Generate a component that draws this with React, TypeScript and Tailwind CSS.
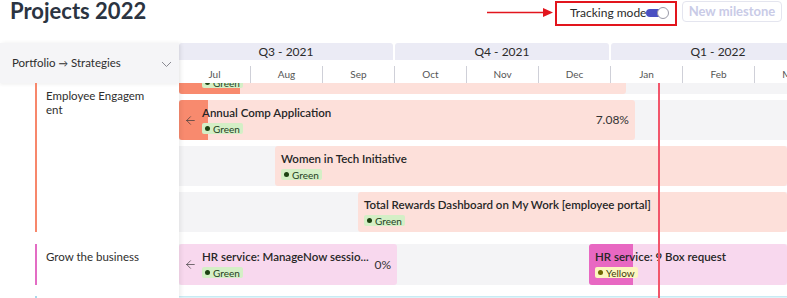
import React from 'react';
import { ArrowLeft } from 'lucide-react';

type BadgeKind = 'green' | 'yellow';

const Badge: React.FC<{ kind: BadgeKind }> = ({ kind }) => (
  <span
    className={`inline-flex items-center gap-[3px] h-[11px] px-[3px] rounded-[2px] text-[10px] leading-none ${
      kind === 'green' ? 'bg-[#d4efc6] text-[#24401c]' : 'bg-[#fcf6bf] text-[#403c0a]'
    }`}
  >
    <span className={`w-[5px] h-[5px] rounded-full ${kind === 'green' ? 'bg-[#1d4212]' : 'bg-[#6f6600]'}`} />
    {kind === 'green' ? 'Green' : 'Yellow'}
  </span>
);

const BarContent: React.FC<{ title: string; badge: BadgeKind; arrow?: boolean; pct?: string }> = ({
  title,
  badge,
  arrow,
  pct,
}) => (
  <div className="relative flex h-full pl-[6px]">
    {arrow && (
      <div className="w-[17px] shrink-0 flex items-center">
        <ArrowLeft size={13} strokeWidth={1.3} className="text-[#3a3a3a] -ml-[1px]" />
      </div>
    )}
    <div className="flex flex-col items-start min-w-0 pt-[5px]">
      <div className="text-[11.5px] leading-[15px] font-semibold text-[#262626] whitespace-nowrap">{title}</div>
      <div className="mt-[3px] flex">
        <Badge kind={badge} />
      </div>
    </div>
    {pct && <div className="ml-auto self-center pr-[6px] text-[12px] text-[#333]">{pct}</div>}
  </div>
);

const quarters = ['Q3 - 2021', 'Q4 - 2021', 'Q1 - 2022'];
const months = ['Jul', 'Aug', 'Sep', 'Oct', 'Nov', 'Dec', 'Jan', 'Feb', 'Mar'];

const App: React.FC = () => {
  return (
    <div className="w-[787px] h-[298px] overflow-hidden bg-white font-['Lato',sans-serif] text-[#2a2a2a]">
      {/* top bar */}
      <div className="h-[43px] flex items-start">
        <h1 className="pl-[10px] text-[22px] leading-none font-bold text-[#2b3441]">Projects 2022</h1>
        <div className="ml-auto flex items-start pr-[5px]">
          <svg width="68" height="25" viewBox="0 0 68 25">
            <line x1="1" y1="12.5" x2="58" y2="12.5" stroke="#e2151d" strokeWidth="1.5" />
            <polygon points="57,8 67,12.5 57,17" fill="#e2151d" />
          </svg>
          <div className="ml-[1px] mt-[1px] h-[25px] w-[122px] border-2 border-solid border-[#e2151d] flex items-center pl-[13px] pb-[2px]">
            <span className="text-[12px] text-[#2a2a2a] whitespace-nowrap">Tracking mode</span>
            <span className="relative shrink-0 w-[23px] h-[12px] flex items-center">
              <span className="w-[18px] h-[8px] rounded-full bg-[#4a50c2]" />
              <span className="absolute right-0 top-0 w-[12px] h-[12px] rounded-full bg-white border border-solid border-[#9a9aa8]" />
            </span>
          </div>
          <button className="ml-[5px] mt-[1px] h-[21px] w-[100px] rounded-[4px] border border-solid border-[#e4e5ef] text-[13px] font-bold text-[#c9cbe7] leading-none whitespace-nowrap">
            New milestone
          </button>
        </div>
      </div>

      {/* main */}
      <div className="flex h-[255px]">
        {/* left column */}
        <div className="relative z-10 w-[179px] shrink-0 bg-white flex flex-col shadow-[2px_0_4px_rgba(0,0,0,0.07)]">
          <div className="h-[40px] bg-[#f5f5f7] flex items-center pl-[12px] pr-[7px] text-[11.5px] text-[#2e2e2e] shadow-[0_2px_3px_rgba(0,0,0,0.05)]">
            <span>
              Portfolio <span className="text-[9.5px]">→</span> Strategies
            </span>
            <svg width="11" height="7" viewBox="0 0 11 7" className="ml-auto mt-[2px]">
              <polyline points="1,1 5.5,5.5 10,1" fill="none" stroke="#8a8a92" strokeWidth="1" />
            </svg>
          </div>
          <div className="flex-1 flex flex-col overflow-hidden">
            <div className="h-[149px] ml-[35px] flex">
              <div className="w-[2px] bg-[#f7876b]" />
              <div className="pl-[9px] pt-[6px] text-[11.5px] leading-[14px] text-[#2e2e2e]">
                Employee Engagem
                <br />
                ent
              </div>
            </div>
            <div className="mt-[12px] h-[41px] ml-[35px] flex">
              <div className="w-[2px] bg-[#e36cc4]" />
              <div className="pl-[9px] pt-[6px] text-[11.5px] leading-[14px] text-[#2e2e2e]">Grow the business</div>
            </div>
            <div className="mt-[11px] flex-1 ml-[35px] flex">
              <div className="w-[2px] bg-[#a8daec]" />
            </div>
          </div>
        </div>

        {/* timeline */}
        <div className="relative flex-1 min-w-0 flex flex-col overflow-hidden">
          <div className="flex h-[17px] shrink-0">
            {quarters.map((q) => (
              <div key={q} className="w-[216px] shrink-0 pr-[2px]">
                <div className="h-full rounded-t-[3px] bg-[#ebebf5] text-center text-[12px] leading-[17px] text-[#2a2a2a]">
                  {q}
                </div>
              </div>
            ))}
          </div>
          <div className="flex h-[21px] mt-[2px] shrink-0 bg-white">
            {months.map((m, i) => (
              <div key={m} className="w-[72px] shrink-0 flex items-end">
                <div
                  className={`w-full h-[17px] text-center text-[10px] leading-[16px] text-[#555] ${
                    i < months.length - 1 ? 'border-r border-solid border-[#cfd0d8]' : ''
                  }`}
                >
                  {m}
                </div>
              </div>
            ))}
          </div>

          <div className="relative flex-1 overflow-hidden">
            <div className="flex flex-col gap-[6px] -mt-[29px]">
              <div className="h-[40px] flex bg-[#f4f4f6]">
                <div className="relative w-[447px] overflow-hidden rounded-[3px] bg-[#fde0da]">
                  <div className="absolute inset-y-0 left-0 w-[61px] bg-[#f88a6e]" />
                  <BarContent title="Compensation Review" badge="green" arrow />
                </div>
              </div>
              <div className="h-[40px] flex bg-[#f4f4f6]">
                <div className="relative w-[456px] overflow-hidden rounded-[3px] bg-[#fde0da]">
                  <div className="absolute inset-y-0 left-0 w-[29px] bg-[#f88a6e]" />
                  <BarContent title="Annual Comp Application" badge="green" arrow pct="7.08%" />
                </div>
              </div>
              <div className="h-[40px] flex bg-[#f4f4f6]">
                <div className="relative ml-[96px] flex-1 overflow-hidden rounded-[3px] bg-[#fde0da]">
                  <BarContent title="Women in Tech Initiative" badge="green" />
                </div>
              </div>
              <div className="h-[40px] flex bg-[#f4f4f6]">
                <div className="relative ml-[179px] flex-1 overflow-hidden rounded-[3px] bg-[#fde0da]">
                  <BarContent title="Total Rewards Dashboard on My Work [employee portal]" badge="green" />
                </div>
              </div>
            </div>

            <div className="mt-[12px] h-[41px] flex bg-[#f4f4f6]">
              <div className="relative w-[218px] overflow-hidden rounded-[3px] bg-[#f8d8ee]">
                <BarContent title="HR service: ManageNow sessio..." badge="green" arrow pct="0%" />
              </div>
              <div className="relative ml-[192px] flex-1 overflow-hidden rounded-[3px] bg-[#f8d8ee]">
                <div className="absolute inset-y-0 left-0 w-[44px] bg-[#e868c2]" />
                <BarContent title="HR service: 9 Box request" badge="yellow" />
              </div>
            </div>

            <div className="mt-[11px] h-[40px] bg-[#def3f8] border-t border-solid border-[#c8ebf4]" />

            <div className="absolute top-0 bottom-0 left-[479px] w-[2px] bg-[#f2566b]" />
          </div>
        </div>
      </div>
    </div>
  );
};

export default App;
